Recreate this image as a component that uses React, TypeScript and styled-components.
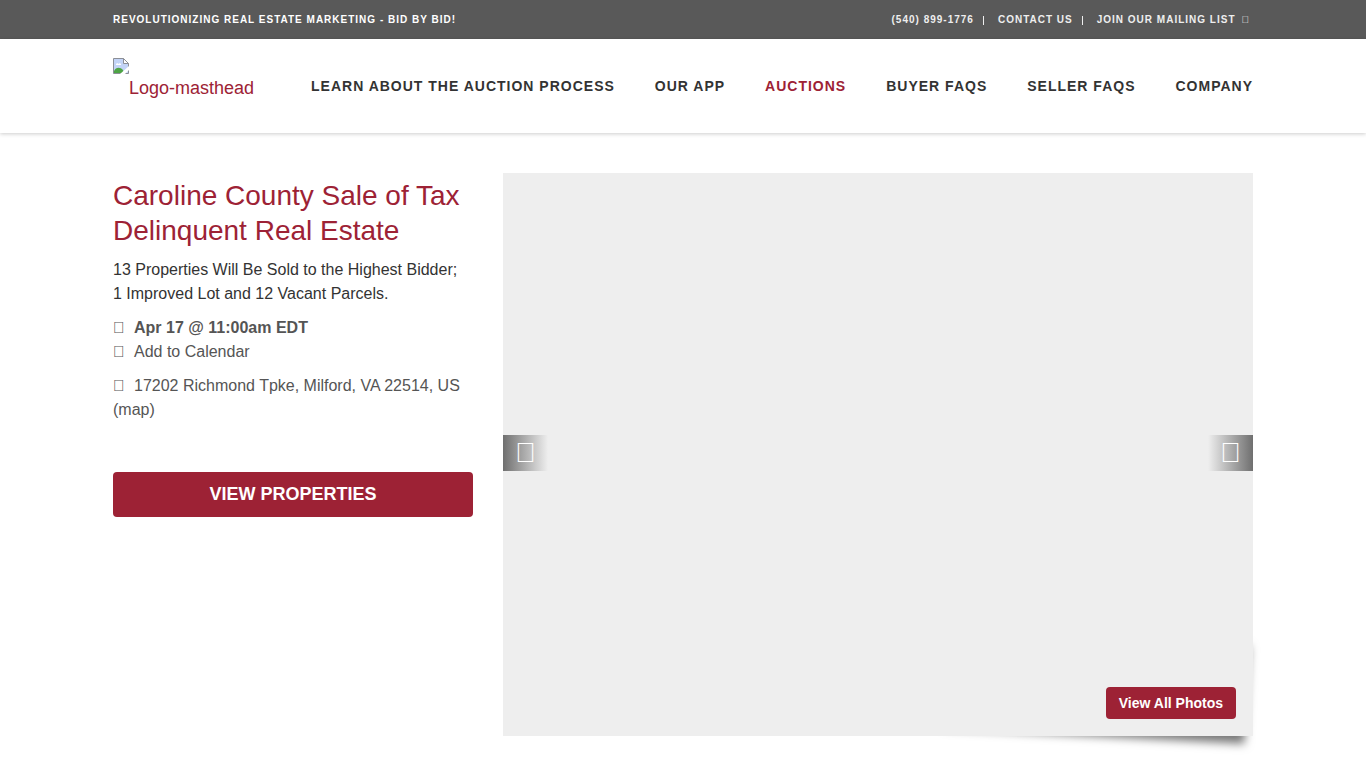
import React from "react";
import styled, { createGlobalStyle } from "styled-components";

const GlobalStyle = createGlobalStyle`
  *, *::before, *::after { box-sizing: border-box; }
  body {
    margin: 0;
    background: #fff;
    color: #333;
    font: 16px/24px "Liberation Sans", Arial, sans-serif;
  }
  a { color: inherit; text-decoration: none; }
  h1, p, ul { margin: 0; padding: 0; }
  ul { list-style: none; }
`;

const Container = styled.div`
  max-width: 1170px;
  margin: 0 auto;
  padding: 0 15px;
`;

const TopBar = styled.div`
  background: #595959;
  color: #fff;
  font-size: 10px;
  line-height: 15px;
  font-weight: 700;
  letter-spacing: 1px;
  text-transform: uppercase;
  padding: 12px 0;
`;

const TopBarRow = styled(Container)`
  display: flex;
  justify-content: space-between;
`;

const TopLinks = styled.ul`
  display: flex;
  padding-right: 3px;
  color: #eee;
`;

const TopLink = styled.li`
  display: flex;
  gap: 6px;

  & + &::before {
    content: "";
    width: 1px;
    height: 9px;
    margin: 4px 8px 0 9px;
    background: #eee;
  }
`;

const Header = styled.header`
  background: #fff;
  box-shadow: 0 1px 4px rgba(0, 0, 0, 0.2);
`;

const HeaderRow = styled(Container)`
  display: flex;
  justify-content: space-between;
  align-items: flex-start;
  padding-top: 19px;
  padding-bottom: 19px;
  min-height: 94px;
`;

const Logo = styled.a`
  display: flex;
  color: #9d2235;
  font-size: 18px;
  line-height: 24px;

  span { padding-top: 18px; }
`;

const NavList = styled.ul`
  display: flex;
  gap: 40px;
  padding-top: 16px;
`;

const NavLink = styled.a<{ $active?: boolean }>`
  color: ${(p) => (p.$active ? "#9d2235" : "#333")};
  font-size: 14px;
  font-weight: 700;
  letter-spacing: 1px;
  text-transform: uppercase;
  white-space: nowrap;
`;

const Main = styled(Container)`
  display: grid;
  grid-template-columns: minmax(0, 360fr) minmax(0, 750fr);
  gap: 30px;
  align-items: start;
  padding-top: 40px;
  padding-bottom: 40px;
`;

const Title = styled.h1`
  color: #9d2235;
  font-size: 28px;
  font-weight: 400;
  line-height: 35px;
  padding-top: 5px;
`;

const Summary = styled.p`
  margin-top: 10px;
`;

const Detail = styled.div`
  margin-top: 10px;
  color: #555;
`;

const Glyph = styled.span`
  display: inline-block;
  margin-right: 9px;
`;

const PrimaryButton = styled.button<{ $block?: boolean }>`
  border: 0;
  border-radius: 4px;
  background: #9d2235;
  color: #fff;
  font-family: inherit;
  font-weight: 700;
  cursor: pointer;
  ${(p) =>
    p.$block
      ? "display: block; width: 100%; margin-top: 50px; padding: 10px; font-size: 18px; line-height: 25px; text-transform: uppercase;"
      : "display: block; padding: 6px 13px; font-size: 14px; line-height: 20px;"}
`;

const Gallery = styled.section`
  position: relative;
  z-index: 0;

  &::after {
    content: "";
    position: absolute;
    z-index: -1;
    top: 80%;
    right: 5px;
    bottom: 15px;
    width: 50%;
    max-width: 300px;
    box-shadow: 0 15px 10px #777;
    transform: rotate(3deg);
  }
`;

const Slide = styled.div`
  display: flex;
  align-items: center;
  justify-content: space-between;
  aspect-ratio: 750 / 563;
  padding-bottom: 3px;
  background: #eee;
`;

const ArrowButton = styled.button<{ $side: "left" | "right" }>`
  width: 45px;
  height: 36px;
  padding: 0;
  border: 0;
  color: #fff;
  font: 28px/36px "Liberation Sans", Arial, sans-serif;
  background: linear-gradient(to ${(p) => (p.$side === "left" ? "right" : "left")}, #6f6f6f, #eee);
  cursor: pointer;
`;

const PhotosAction = styled.div`
  position: absolute;
  right: 17px;
  bottom: 17px;
`;

const topLinks = [
  { label: "(540) 899-1776", href: "tel:5408991776" },
  { label: "Contact Us", href: "#contact" },
  { label: "Join Our Mailing List", href: "#mailing-list", glyph: "\uf0e0" },
];

const navLinks = [
  "Learn About the Auction Process",
  "Our App",
  "Auctions",
  "Buyer FAQs",
  "Seller FAQs",
  "Company",
];

const MissingImage = () => (
  <svg width="16" height="16" viewBox="0 0 16 16" aria-hidden="true">
    <path d="M.5.5h10l5 5v10H.5z" fill="#c3d4f7" />
    <path d="M1 15v-2c2-4 6-4 9-1l1 3z" fill="#4ea445" />
    <path d="M3 7c0-2 2-2 2.500-1 1-1.500 3-.5 2.500 1z" fill="#fff" />
    <path d="M.5 15.500V.5h10l5 5v10H.5z" fill="none" stroke="#8c8f96" />
    <path d="M10.500.5v5h5z" fill="#fff" stroke="#8c8f96" />
    <path d="M7 16l9-8v4l-4 4z" fill="#fff" />
  </svg>
);

export default function App() {
  return (
    <>
      <GlobalStyle />
      <TopBar>
        <TopBarRow>
          <span>Revolutionizing Real Estate Marketing - Bid by Bid!</span>
          <TopLinks>
            {topLinks.map((l) => (
              <TopLink key={l.label}>
                <a href={l.href}>{l.label}</a>
                {l.glyph && <span aria-hidden="true">{l.glyph}</span>}
              </TopLink>
            ))}
          </TopLinks>
        </TopBarRow>
      </TopBar>
      <Header>
        <HeaderRow>
          <Logo href="#home">
            <MissingImage />
            <span>Logo-masthead</span>
          </Logo>
          <nav>
            <NavList>
              {navLinks.map((label) => (
                <li key={label}>
                  <NavLink href="#" $active={label === "Auctions"}>{label}</NavLink>
                </li>
              ))}
            </NavList>
          </nav>
        </HeaderRow>
      </Header>
      <Main as="main">
        <section>
          <Title>Caroline County Sale of Tax Delinquent Real Estate</Title>
          <Summary>
            13 Properties Will Be Sold to the Highest Bidder;
            <br />1 Improved Lot and 12 Vacant Parcels.
          </Summary>
          <Detail>
            <div>
              <Glyph aria-hidden="true">{"\uf073"}</Glyph>
              <strong>Apr 17 @ 11:00am EDT</strong>
            </div>
            <div>
              <Glyph aria-hidden="true">{"\uf271"}</Glyph>
              <a href="#calendar">Add to Calendar</a>
            </div>
          </Detail>
          <Detail>
            <Glyph aria-hidden="true">{"\uf041"}</Glyph>
            17202 Richmond Tpke, Milford, VA 22514, US <a href="#map">(map)</a>
          </Detail>
          <PrimaryButton $block>View Properties</PrimaryButton>
        </section>
        <Gallery aria-label="Photos">
          <Slide>
            <ArrowButton $side="left" aria-label="Previous photo">{"\uf104"}</ArrowButton>
            <ArrowButton $side="right" aria-label="Next photo">{"\uf105"}</ArrowButton>
          </Slide>
          <PhotosAction>
            <PrimaryButton>View All Photos</PrimaryButton>
          </PhotosAction>
        </Gallery>
      </Main>
    </>
  );
}
